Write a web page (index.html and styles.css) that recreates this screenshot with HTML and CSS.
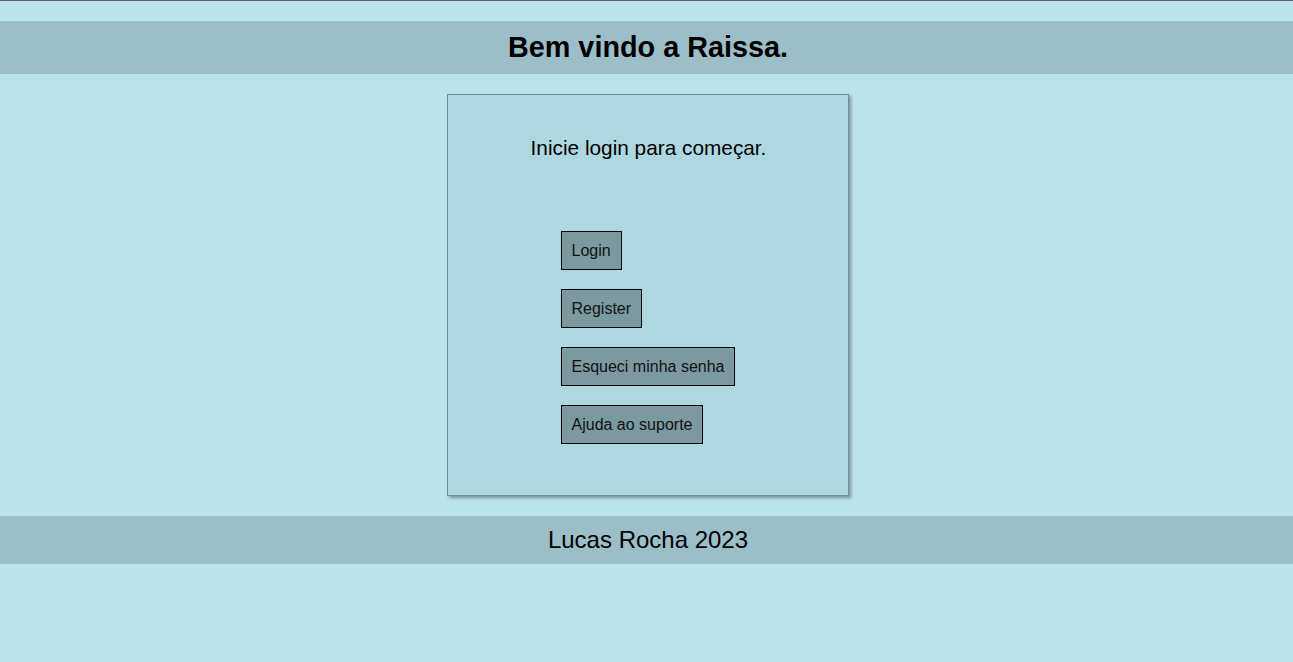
FILE: index.html
```html
<!DOCTYPE html>
<html lang="pt">
<head>
<meta charset="utf-8">
<title>Bem vindo</title>
<link rel="stylesheet" href="styles.css">
</head>
<body>
<header class="topbar"><h1 class="title">Bem vindo a Raissa.</h1></header>
<main class="main">
  <section class="card">
    <p class="lead">Inicie login para começar.</p>
    <div class="actions">
      <button class="btn">Login</button>
      <button class="btn">Register</button>
      <button class="btn">Esqueci minha senha</button>
      <button class="btn">Ajuda ao suporte</button>
    </div>
  </section>
</main>
<footer class="footer">Lucas Rocha 2023</footer>
</body>
</html>
```
FILE: styles.css
```css
html, body { margin: 0; padding: 0; }
body {
  background: #b8e4ea;
  font-family: "Liberation Sans", Arial, sans-serif;
  color: #000;
  border-top: 1px solid #5f5f5f;
  min-height: 661px;
}
.topbar {
  margin-top: 20px;
  background: #9abfc7;
  height: 53px;
  padding-left: 3px;
  display: flex;
  align-items: center;
  justify-content: center;
}
.title {
  margin: 0;
  font-size: 28.8px;
  font-weight: bold;
}
.main {
  display: flex;
  justify-content: center;
  padding: 20px 0 20px 2px;
}
.card {
  box-sizing: border-box;
  width: 402px;
  height: 402px;
  background: #add8e0;
  border: 1px solid #6f8f95;
  box-shadow: 2px 2px 3px rgba(0,0,0,0.35);
}
.lead {
  margin: 41px 0 0;
  padding-left: 2px;
  text-align: center;
  font-size: 20.8px;
  line-height: 24px;
}
.actions {
  display: flex;
  flex-direction: column;
  align-items: flex-start;
  gap: 19px;
  margin-top: 71px;
  padding-left: 113px;
}
.btn {
  font-family: "Liberation Sans", Arial, sans-serif;
  font-size: 16px;
  line-height: 18px;
  padding: 10px 10px 9px;
  background: #7b9aa0;
  border: 1px solid #000;
  color: #111;
  border-radius: 0;
}
.footer {
  background: #9abfc7;
  height: 48px;
  padding-left: 3px;
  display: flex;
  align-items: center;
  justify-content: center;
  font-size: 24px;
}
```
